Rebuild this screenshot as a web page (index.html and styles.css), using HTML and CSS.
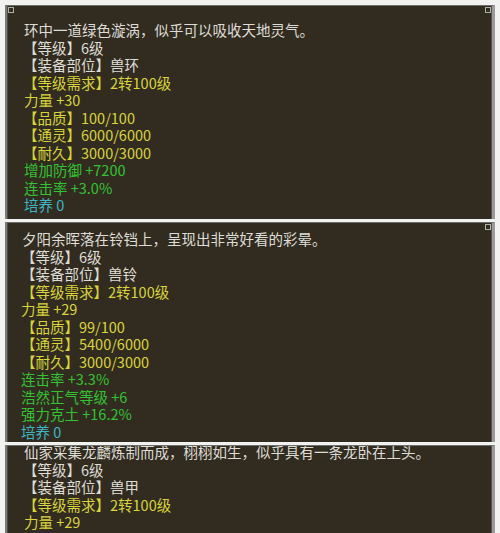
FILE: index.html
```html
<!DOCTYPE html>
<html>
<head>
<meta charset="utf-8">
<link rel="stylesheet" href="styles.css">
</head>
<body>
<div class="stack">
  <div class="panel p1">
    <div class="lines">
      <div class="w desc">环中一道绿色漩涡，似乎可以吸收天地灵气。</div>
      <div class="w">【等级】6级</div>
      <div class="w">【装备部位】兽环</div>
      <div class="y">【等级需求】2转100级</div>
      <div class="y nb">力量 +30</div>
      <div class="y">【品质】100/100</div>
      <div class="y">【通灵】6000/6000</div>
      <div class="y">【耐久】3000/3000</div>
      <div class="g nb">增加防御 +7200</div>
      <div class="g nb">连击率 +3.0%</div>
      <div class="c nb">培养 0</div>
    </div>
  </div>
  <div class="panel p2">
    <div class="lines">
      <div class="w desc">夕阳余晖落在铃铛上，呈现出非常好看的彩晕。</div>
      <div class="w">【等级】6级</div>
      <div class="w">【装备部位】兽铃</div>
      <div class="y">【等级需求】2转100级</div>
      <div class="y nb">力量 +29</div>
      <div class="y">【品质】99/100</div>
      <div class="y">【通灵】5400/6000</div>
      <div class="y">【耐久】3000/3000</div>
      <div class="g nb">连击率 +3.3%</div>
      <div class="g nb">浩然正气等级 +6</div>
      <div class="g nb">强力克土 +16.2%</div>
      <div class="c nb">培养 0</div>
    </div>
  </div>
  <div class="panel p3">
    <div class="lines">
      <div class="w desc">仙家采集龙麟炼制而成，栩栩如生，似乎具有一条龙卧在上头。</div>
      <div class="w">【等级】6级</div>
      <div class="w">【装备部位】兽甲</div>
      <div class="y">【等级需求】2转100级</div>
      <div class="y nb">力量 +29</div>
      <div class="y">【品质】99/100</div>
    </div>
  </div>
</div>
</body>
</html>
```
FILE: styles.css
```css
html, body {
  margin: 0;
  padding: 0;
}
body {
  width: 500px;
  height: 533px;
  overflow: hidden;
  background: #f2f2f0;
  font-family: "Noto Sans CJK SC", "Noto Sans", sans-serif;
  font-size: 14.5px;
}
.stack {
  padding: 5px 5px 0 5px;
  display: flex;
  flex-direction: column;
  gap: 3px;
}
.panel {
  position: relative;
  background: #322c20;
  border-left: 2px solid #7d7d78;
  border-right: 3px solid #9a9a96;
  border-top: 1px solid #6e6e6a;
  box-shadow: inset 1px 0 0 #4a4a46, inset -1px 0 0 #55554f;
  overflow: hidden;
}
.lines {
  line-height: 17.5px;
  white-space: nowrap;
}
.p1 {
  height: 214px;
  padding: 15px 0 0 16px;
  box-sizing: border-box;
}
.p2 {
  height: 220px;
  padding: 7px 0 0 14px;
  box-sizing: border-box;
}
.p2 .nb { margin-left: 0; }
.p3 {
  height: 90px;
  padding: 0 0 0 16px;
  box-sizing: border-box;
}
.p3 .lines { margin-top: -3px; }
.p1::before, .p1::after, .p2::after {
  content: "";
  position: absolute;
  width: 4px;
  height: 4px;
  border: 1px solid #b0b0a8;
  top: 1px;
}
.p1::before { left: 1px; }
.p1::after, .p2::after { right: 1px; }
.w { color: #dedcd6; }
.y { color: #d9d43a; }
.g { color: #32c232; }
.c { color: #3eb6c6; }
.nb { margin-left: 1px; }
.desc { margin-left: 1px; }
```
